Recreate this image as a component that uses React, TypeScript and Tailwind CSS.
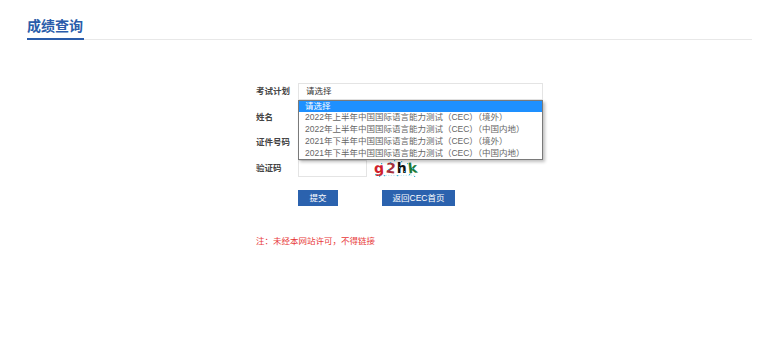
import React from 'react';

const options = [
  '请选择',
  '2022年上半年中国国际语言能力测试（CEC）（境外）',
  '2022年上半年中国国际语言能力测试（CEC）（中国内地）',
  '2021年下半年中国国际语言能力测试（CEC）（境外）',
  '2021年下半年中国国际语言能力测试（CEC）（中国内地）',
];

function Captcha() {
  return (
    <div className="relative ml-[6px] flex h-[18px] w-[45px] items-center gap-[1.5px] bg-white pl-[1px]">
      <span className="text-[14px] font-bold leading-none text-[#d0202a] [font-family:'DejaVu_Sans',sans-serif] -rotate-3">g</span>
      <span className="text-[14px] font-bold leading-none text-[#a8303a] [font-family:'DejaVu_Sans',sans-serif] rotate-6">2</span>
      <span className="text-[14px] font-bold leading-none text-[#111] [font-family:'DejaVu_Sans',sans-serif]">h</span>
      <span className="text-[14px] font-bold leading-none text-[#1d7a3a] [font-family:'DejaVu_Sans',sans-serif] -rotate-6">k</span>
      <svg className="absolute inset-0" width="45" height="18" viewBox="0 0 45 18">
        <g fill="#3fb8d8">
          {[[2, 15], [6, 17], [11, 16], [17, 3], [21, 1], [24, 16], [28, 2], [31, 12], [34, 4], [36, 15], [39, 9], [41, 17], [15, 10], [26, 8], [8, 4]].map(([x, y], i) => (
            <rect key={i} x={x} y={y} width="1.2" height="1.2" />
          ))}
        </g>
        <path d="M3 16 Q 20 17 42 16" stroke="#7fcde0" strokeWidth="0.6" fill="none" strokeDasharray="1 1.5" />
      </svg>
    </div>
  );
}

export default function App() {
  return (
    <div className="min-h-[346px] bg-white [font-family:'Liberation_Sans','Noto_Sans_CJK_SC',sans-serif]">
      <div className="ml-[27px] mr-[22px] pt-[14px]">
        <div className="flex border-b border-[#e8e8e8]">
          <span className="-mb-px border-b-2 border-[#2a5caa] pr-[1px] text-[14px] font-bold leading-[24px] text-[#2a5caa]">
            成绩查询
          </span>
        </div>

        <div className="ml-[229px] mt-[43px] flex flex-col gap-[8.5px] text-[8.5px]">
          <div className="flex h-[17px] items-center">
            <span className="w-[42px] font-bold text-[#444]">考试计划</span>
            <div className="relative">
              <div className="flex h-[17px] w-[245px] items-center border border-[#e4e4e4] pl-[7px] text-[#333]">
                请选择
              </div>
              <div className="absolute left-0 top-[16.5px] z-10 w-[245px] border border-[#7a7a7a] bg-white shadow-[2px_2px_3px_rgba(0,0,0,0.25)]">
                {options.map((o, i) => (
                  <div
                    key={o}
                    className={
                      i === 0
                        ? 'h-[11.8px] whitespace-nowrap bg-[#1e90ff] pl-[6px] leading-[11.8px] text-white'
                        : 'h-[11.8px] whitespace-nowrap pl-[6px] leading-[11.8px] text-[#666]'
                    }
                  >
                    {o}
                  </div>
                ))}
              </div>
            </div>
          </div>

          <div className="flex h-[17px] items-center">
            <span className="w-[42px] font-bold text-[#444]">姓名</span>
            <div className="h-[17px] w-[245px] border border-[#e4e4e4]" />
          </div>

          <div className="flex h-[17px] items-center">
            <span className="w-[42px] font-bold text-[#444]">证件号码</span>
            <div className="h-[17px] w-[245px] border border-[#e4e4e4]" />
          </div>

          <div className="flex h-[17px] items-center">
            <span className="w-[42px] font-bold text-[#444]">验证码</span>
            <div className="h-[17px] w-[69px] border border-[#e4e4e4]" />
            <Captcha />
          </div>

          <div className="ml-[42px] mt-[5px] flex gap-[44px]">
            <button className="h-[16px] w-[40px] bg-[#2b62ae] text-[8.5px] text-white">提交</button>
            <button className="h-[16px] w-[73px] bg-[#2b62ae] text-[8.5px] text-white">返回CEC首页</button>
          </div>

          <p className="mt-[20px] leading-[12px] text-[#e83a3a]">注：未经本网站许可，不得链接</p>
        </div>
      </div>
    </div>
  );
}
